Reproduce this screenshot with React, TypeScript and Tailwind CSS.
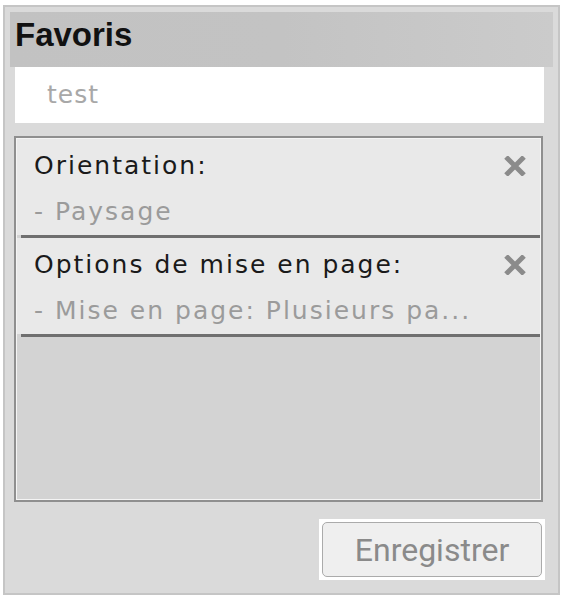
import React from 'react';

const favorites = [
  { label: "Orientation:", value: "- Paysage" },
  { label: "Options de mise en page:", value: "- Mise en page: Plusieurs pa..." },
];

function CloseIcon() {
  return (
    <svg width="24" height="20" viewBox="0 0 24 20" className="shrink-0">
      <path d="M3 1 L21 19 M21 1 L3 19" stroke="#8b8b8b" strokeWidth="5" strokeLinecap="butt" fill="none" />
    </svg>
  );
}

export default function App() {
  return (
    <div className="w-[565px] h-[601px] bg-white pt-[5px] pl-[3px]">
      <div className="w-[557px] h-[590px] border-2 border-[#c5c5c5] bg-[#dadada] pt-[5px] pl-[5px]">
        <div className="w-[543px] flex flex-col">
          {/* Header */}
          <div className="h-[55px] pl-[5px] pt-[5px] bg-gradient-to-r from-[#c2c2c2] via-[#c3c3c3] to-[#cbcbcb]">
            <h1 className="text-[33px] leading-[36px] font-bold text-[#111] [font-family:'Liberation_Sans',Arial,sans-serif]">
              Favoris
            </h1>
          </div>

          {/* Name input */}
          <div className="ml-[5px] w-[529px] h-[56px] bg-white flex items-center pl-[32px] text-[25px] tracking-[1px] text-[#a8a8a8] [font-family:'DejaVu_Sans',sans-serif]">
            test
          </div>

          {/* Settings list */}
          <div className="mt-[13px] ml-[4px] w-[529px] h-[366px] border-2 border-[#8f8f8f]">
            <div className="h-full border border-[#f4f4f4] bg-[#d3d3d3] flex flex-col [font-family:'DejaVu_Sans',sans-serif]">
              {favorites.map((item) => (
                <div key={item.label}>
                  <div className="bg-[#e9e9e9] h-[96px] pt-[12px] pl-[17px] pr-[13px] text-[25px] leading-[30px] tracking-[2px]">
                    <div className="flex items-center justify-between">
                      <span className="text-[#1a1a1a]">{item.label}</span>
                      <CloseIcon />
                    </div>
                    <div className="mt-[16px] text-[#9b9b9b] whitespace-nowrap">{item.value}</div>
                  </div>
                  <div className="h-[3px] ml-[4px] bg-[#6f6f6f]" />
                </div>
              ))}
            </div>
          </div>

          {/* Save button */}
          <div className="mt-[17px] self-end mr-[8px] bg-white p-[3px]">
            <button className="w-[220px] h-[55px] rounded-[5px] border border-[#ababab] bg-[#efefef] flex items-center justify-center text-[32px] text-[#8a8a8a] [font-family:Roboto,'Liberation_Sans',sans-serif]">
              Enregistrer
            </button>
          </div>
        </div>
      </div>
    </div>
  );
}
